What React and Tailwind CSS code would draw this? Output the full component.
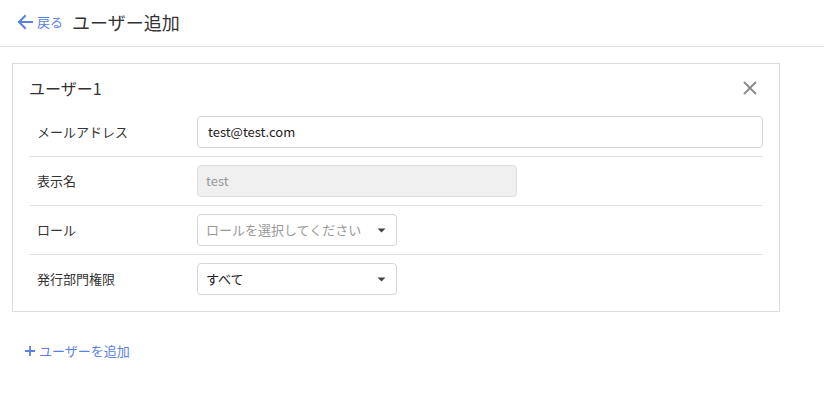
export default function App() {
  const font = { fontFamily: '"Noto Sans CJK JP", "Noto Sans", sans-serif' };
  const Caret = () => (
    <svg width="9" height="5" viewBox="0 0 9 5" className="shrink-0">
      <path d="M0.5 0.5 L8.5 0.5 L4.5 4.5 Z" fill="#444" />
    </svg>
  );
  return (
    <div className="w-[824px] h-[394px] bg-white text-[#333]" style={font}>
      <div className="h-[47px] border-b border-[#e2e2e2] flex items-center pl-[16px] pb-[3px]">
        <div className="flex items-center text-[#5a7fe6] text-[13px] leading-[18px]">
          <svg width="18" height="18" viewBox="0 0 18 18" className="mr-[3px]">
            <path d="M16 9 H3 M9 3 L3 9 L9 15" stroke="#5a7fe6" strokeWidth="2" fill="none" strokeLinecap="square" />
          </svg>
          <span>戻る</span>
        </div>
        <div className="ml-[9px] text-[18px] leading-[24px] text-[#333]">ユーザー追加</div>
      </div>
      <div className="pt-[16px] pl-[12px]">
        <div className="w-[768px] border border-[#dcdcdc] px-[16px] pt-[14px] pb-[8px]">
          <div className="flex items-center justify-between h-[20px] mb-[10px]">
            <div className="text-[16px] leading-[20px] text-[#333]">ユーザー1</div>
            <svg width="16" height="16" viewBox="0 0 16 16" className="mr-[5px]">
              <path d="M2 2 L14 14 M14 2 L2 14" stroke="#888" strokeWidth="1.8" />
            </svg>
          </div>
          <div className="flex items-center py-[8px] border-b border-[#e2e2e2]">
            <div className="w-[168px] pl-[8px] text-[13px]">メールアドレス</div>
            <div className="flex-1 h-[32px] border border-[#d6d6d6] rounded-[4px] flex items-center px-[10px] text-[13px] text-[#222]">test@test.com</div>
          </div>
          <div className="flex items-center py-[8px] border-b border-[#e2e2e2]">
            <div className="w-[168px] pl-[8px] text-[13px]">表示名</div>
            <div className="w-[320px] h-[32px] border border-[#dedede] bg-[#f0f0f0] rounded-[4px] flex items-center px-[8px] text-[13px] text-[#999]">test</div>
          </div>
          <div className="flex items-center py-[8px] border-b border-[#e2e2e2]">
            <div className="w-[168px] pl-[8px] text-[13px]">ロール</div>
            <div className="w-[200px] h-[32px] border border-[#d6d6d6] rounded-[4px] flex items-center justify-between pl-[8px] pr-[10px] text-[13px] text-[#999]">
              <span>ロールを選択してください</span>
              <Caret />
            </div>
          </div>
          <div className="flex items-center py-[8px]">
            <div className="w-[168px] pl-[8px] text-[13px]">発行部門権限</div>
            <div className="w-[200px] h-[32px] border border-[#d6d6d6] rounded-[4px] flex items-center justify-between pl-[8px] pr-[10px] text-[13px] text-[#222]">
              <span>すべて</span>
              <Caret />
            </div>
          </div>
        </div>
      </div>
      <div className="pl-[24px] mt-[30px] flex items-center text-[13px] leading-[18px] text-[#5a7fe6]">
        <svg width="12" height="12" viewBox="0 0 12 12" className="mr-[3px]">
          <path d="M6 1 V11 M1 6 H11" stroke="#5a7fe6" strokeWidth="1.8" />
        </svg>
        <span>ユーザーを追加</span>
      </div>
    </div>
  );
}
